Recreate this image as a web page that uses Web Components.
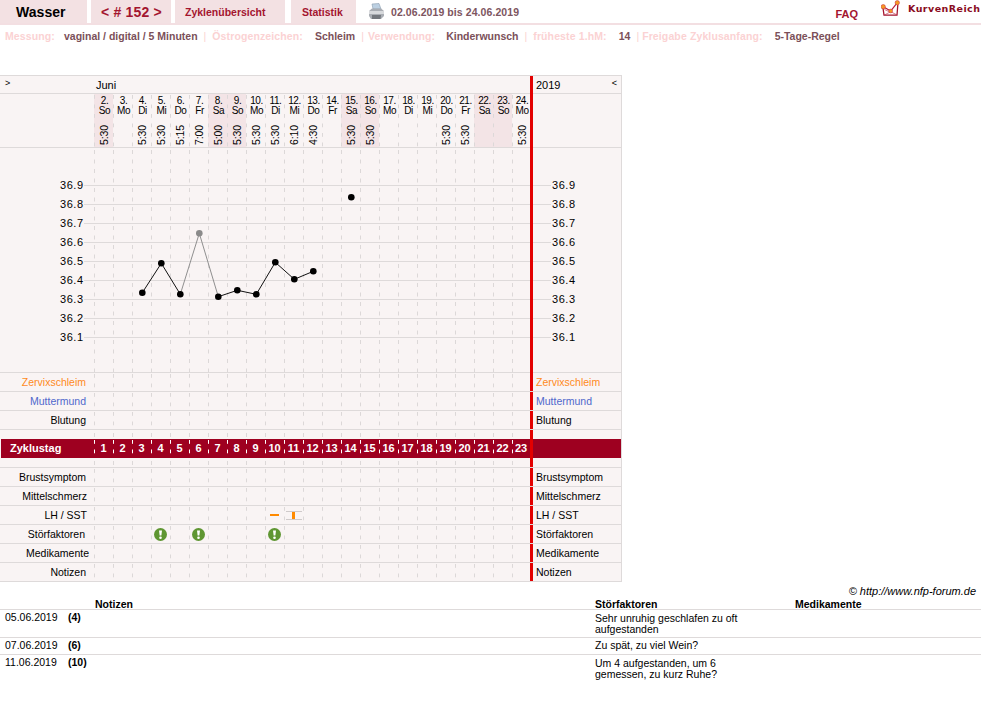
<!DOCTYPE html>
<html lang="de">
<head>
<meta charset="utf-8">
<title>Wasser</title>
<style>
  html, body { margin: 0; background: #fff; }
  body { font: 11px "Liberation Sans", Arial, sans-serif; color: #000; }
</style>
</head>
<body>
<site-header></site-header>
<meta-bar>
  <meta-item label="Messung:" value="vaginal / digital / 5 Minuten" gap="9" after="6"></meta-item>
  <meta-item label="Östrogenzeichen:" value="Schleim" gap="12" after="4"></meta-item>
  <meta-item label="Verwendung:" value="Kinderwunsch" gap="11" after="6"></meta-item>
  <meta-item label="früheste 1.hM:" value="14" gap="12" after="3"></meta-item>
  <meta-item label="Freigabe Zyklusanfang:" value="5-Tage-Regel" gap="12" last></meta-item>
</meta-bar>
<cycle-chart></cycle-chart>
<note-table>
  <note-row date="05.06.2019" day="(4)" factor="Sehr unruhig geschlafen zu oft aufgestanden" tall></note-row>
  <note-row date="07.06.2019" day="(6)" factor="Zu spät, zu viel Wein?"></note-row>
  <note-row date="11.06.2019" day="(10)" factor="Um 4 aufgestanden, um 6 gemessen, zu kurz Ruhe?" tall last></note-row>
</note-table>

<script>
const LINE = '#dedada';
const CHART_BG = '#f9f4f4';
const SHADE = '#f3e4e6';
const DASH = 'linear-gradient(#dcd8d8 0 4px, transparent 4px) 0 1px / 1px 9.5px repeat-y';

const DAYS = [
  ['2.', 'So', '5:30'], ['3.', 'Mo', ''], ['4.', 'Di', '5:30'], ['5.', 'Mi', '5:30'],
  ['6.', 'Do', '5:15'], ['7.', 'Fr', '7:00'], ['8.', 'Sa', '5:00'], ['9.', 'So', '5:30'],
  ['10.', 'Mo', '5:30'], ['11.', 'Di', '5:30'], ['12.', 'Mi', '6:10'], ['13.', 'Do', '4:30'],
  ['14.', 'Fr', ''], ['15.', 'Sa', '5:30'], ['16.', 'So', '5:30'], ['17.', 'Mo', ''],
  ['18.', 'Di', ''], ['19.', 'Mi', ''], ['20.', 'Do', '5:30'], ['21.', 'Fr', '5:30'],
  ['22.', 'Sa', ''], ['23.', 'So', ''], ['24.', 'Mo', '5:30'],
];
const COLS = 'repeat(22, 19px) 18px';

class SiteHeader extends HTMLElement {
  constructor() {
    super();
    this.attachShadow({mode: 'open'});
    this.shadowRoot.innerHTML = `
      <style>
        :host { display: flex; height: 23px; border-bottom: 2px solid #f3dfe2; color: #a3152f; font-weight: bold; }
        .tab { background: #f3e1e3; display: flex; align-items: center; box-sizing: border-box; white-space: nowrap; }
        .name { width: 87px; margin-right: 4px; padding-left: 16px; color: #000; font-size: 14px; letter-spacing: .05px; }
        .nav { width: 80px; margin-right: 4px; padding-left: 10px; font-size: 14px; letter-spacing: .2px; }
        .over { width: 110px; margin-right: 6px; padding-left: 10px; font-size: 10.5px; }
        .stat { width: 65px; padding-left: 11px; font-size: 10.5px; }
        .printer { margin: 3px 0 0 12px; width: 17px; height: 17px; }
        .range { margin: 0 0 0 6px; align-self: center; color: #7d5560; font-size: 10.5px; letter-spacing: .08px; }
        .faq { margin-left: auto; align-self: center; padding-top: 5px; font-size: 11px; }
        .logo { margin: 0 3px 0 23px; width: 24px; height: 20px; }
        .brand { width: 73px; padding-top: 3px; color: #8a0c22; font: bold 9.5px "DejaVu Sans", sans-serif; letter-spacing: .45px; white-space: nowrap; }
      </style>
      <div class="tab name">Wasser</div>
      <div class="tab nav">&lt; # 152 &gt;</div>
      <div class="tab over">Zyklenübersicht</div>
      <div class="tab stat">Statistik</div>
      <svg class="printer" viewBox="0 0 17 17">
        <path d="M4 1 L11 0.5 L13 6 L5 6 Z" fill="#bcd0e2" stroke="#8a9caf" stroke-width=".6"/>
        <path d="M1 8 L4 5.5 L13 5.5 L16 8 L16 13 L13 16 L3 16 L1 13 Z" fill="#a9adb3"/>
        <path d="M1 8 L16 8 L16 11 L1 11 Z" fill="#d7d9dc"/>
        <path d="M4 12 L13 12 L12.5 16 L4 16 Z" fill="#73777d"/>
      </svg>
      <div class="range">02.06.2019 bis 24.06.2019</div>
      <div class="faq">FAQ</div>
      <svg class="logo" viewBox="0 0 24 20">
        <path d="M2 8 L3 15.2 L16 15.2 L16.8 5" fill="none" stroke="#a3152f" stroke-width="1.3"/>
        <path d="M3.5 9.5 L9 12 L3.5 15 M16 15 L9.5 11.5" fill="none" stroke="#c9405a" stroke-width=".7"/>
        <path d="M2.2 6.7 L9.7 11 L16.3 2.7" fill="none" stroke="#b81c37" stroke-width="1.2"/>
        <circle cx="2.2" cy="6.7" r="2.2" fill="#f59a23" stroke="#c5223e" stroke-width=".5"/>
        <circle cx="9.7" cy="11" r="1.9" fill="#f59a23" stroke="#c5223e" stroke-width=".5"/>
        <circle cx="16.3" cy="2.7" r="2.2" fill="#f59a23" stroke="#c5223e" stroke-width=".5"/>
      </svg>
      <div class="brand">KurvenReich</div>`;
  }
}

class MetaBar extends HTMLElement {
  constructor() {
    super();
    this.attachShadow({mode: 'open'});
    this.shadowRoot.innerHTML = `
      <style>
        :host { display: flex; height: 22px; align-items: center; padding-left: 5px; font-size: 10.5px; font-weight: bold; }
      </style>
      <slot></slot>`;
  }
}

class MetaItem extends HTMLElement {
  constructor() {
    super();
    this.attachShadow({mode: 'open'});
  }
  connectedCallback() {
    const gap = this.getAttribute('gap');
    const after = this.getAttribute('after') || 5;
    this.shadowRoot.innerHTML = `
      <style>
        :host { display: flex; white-space: nowrap; }
        .l, .sep { color: #fbd2d3; }
        .l { letter-spacing: .12px; }
        .v { color: #7b5059; margin-left: ${gap}px; }
        .sep { margin: 0 ${after}px 0 6px; font-weight: normal; }
      </style>
      <span class="l">${this.getAttribute('label')}</span>
      <span class="v">${this.getAttribute('value')}</span>
      ${this.hasAttribute('last') ? '' : '<span class="sep">|</span>'}`;
  }
}

class TempPlot extends HTMLElement {
  constructor() {
    super();
    this.attachShadow({mode: 'open'});
  }
  connectedCallback() {
    const W = 530, H = 224;
    const yOf = i => 37.5 + 19 * i;  // 36.9 is at page y 185, the plot starts at 148
    let s = '';
    for (let k = 0; k < 23; k++) {
      const x = 94.5 + 19 * k;
      s += `<line x1="${x}" x2="${x}" y1="2" y2="${H}" stroke="#dcd8d8" stroke-dasharray="4 5.5"/>`;
    }
    for (let i = 0; i < 9; i++) {
      const y = yOf(i);
      s += `<line x1="84" x2="${W}" y1="${y}" y2="${y}" stroke="${LINE}"/>`;
      s += `<text x="60" y="${y + 3}" textLength="23">${(36.9 - i / 10).toFixed(1)}</text>`;
    }
    const pts = [[142.3, 292.7], [161.3, 263.3], [180.3, 294.3], [199.3, 233.3, 1], [218.3, 296.7],
      [237.3, 290.3], [256.3, 294.3], [275.3, 262.3], [294.3, 279.3], [313.3, 271.3]];
    pts.forEach((p, i) => {
      const n = pts[i + 1];
      if (!n) return;
      const grey = p[2] || n[2];
      s += `<line x1="${p[0]}" y1="${p[1] - 148}" x2="${n[0]}" y2="${n[1] - 148}" stroke="${grey ? '#8f8f8f' : '#111'}" stroke-width="1"/>`;
    });
    pts.concat([[351.3, 197.3]]).forEach(p => {
      s += `<circle cx="${p[0]}" cy="${p[1] - 148}" r="3.3" fill="${p[2] ? '#8b8b8b' : '#000'}"/>`;
    });
    this.shadowRoot.innerHTML = `
      <style>
        :host { display: block; height: ${H}px; border-bottom: 1px solid ${LINE}; }
        svg { display: block; }
        text { font: 11px "Liberation Sans", sans-serif; fill: #000; }
      </style>
      <svg width="${W}" height="${H}">${s}</svg>`;
  }
}

class PlotAxis extends HTMLElement {
  constructor() {
    super();
    this.attachShadow({mode: 'open'});
    const ticks = [];
    for (let i = 0; i < 9; i++) ticks.push(`<div class="t"><i></i><span>${(36.9 - i / 10).toFixed(1)}</span></div>`);
    this.shadowRoot.innerHTML = `
      <style>
        :host { display: block; height: 196px; padding-top: 28px; border-bottom: 1px solid ${LINE}; }
        .t { display: flex; align-items: center; height: 19px; }
        i { width: 18px; height: 1px; background: ${LINE}; }
        span { margin: 0 0 2px 1px; width: 24px; letter-spacing: .55px; }
      </style>
      ${ticks.join('')}`;
  }
}

class DayHead extends HTMLElement {
  constructor() {
    super();
    this.attachShadow({mode: 'open'});
    const cells = DAYS.map(d => {
      const weekend = d[1] === 'Sa' || d[1] === 'So';
      return `<div class="d${weekend ? ' we' : ''}"><b>${d[0]}</b><b>${d[1]}</b>${d[2] ? `<em>${d[2]}</em>` : ''}</div>`;
    }).join('');
    this.shadowRoot.innerHTML = `
      <style>
        :host { display: grid; grid-template-columns: 94px ${COLS}; height: 53px; border-bottom: 1px solid ${LINE}; }
        .d { display: flex; flex-direction: column; align-items: center; padding: 2px 0 0 2px; box-sizing: border-box; height: 53px; background: ${DASH}; font-size: 10px; letter-spacing: -.4px; }
        .we { background: ${DASH}, ${SHADE}; }
        b { font-weight: normal; line-height: 10px; }
        em { font-style: normal; writing-mode: vertical-rl; transform: rotate(180deg); margin-top: auto; margin-bottom: 2px; font-size: 10.5px; letter-spacing: -.1px; line-height: 11px; }
      </style>
      <div></div>${cells}`;
  }
}

class WarnIcon extends HTMLElement {
  constructor() {
    super();
    this.attachShadow({mode: 'open'});
    this.shadowRoot.innerHTML = `
      <style>:host { display: block; width: 13px; height: 13px; } svg { display: block; }</style>
      <svg width="13" height="13" viewBox="0 0 13 13">
        <circle cx="6.5" cy="6.5" r="6.5" fill="#5f9632"/>
        <path d="M5 2.5 H8 L7.4 7.5 H5.6 Z" fill="#fff"/>
        <circle cx="6.5" cy="9.7" r="1.3" fill="#fff"/>
      </svg>`;
  }
}

class ChartRow extends HTMLElement {
  constructor() {
    super();
    this.attachShadow({mode: 'open'});
  }
  connectedCallback() {
    const label = this.getAttribute('label') || '';
    const color = this.getAttribute('color') || '#000';
    const pr = this.getAttribute('pr') || 8;
    const warn = (this.getAttribute('warn') || '').split(',');
    const lh = this.getAttribute('lh');
    const sst = this.getAttribute('sst');
    let cells = '';
    for (let k = 1; k <= 23; k++) {
      let inner = '';
      if (warn.includes(String(k))) inner = '<warn-icon></warn-icon>';
      if (lh === String(k)) inner = '<i class="lh"></i>';
      if (sst === String(k)) inner = '<i class="sst"><u></u></i>';
      cells += `<div class="c">${inner}</div>`;
    }
    this.shadowRoot.innerHTML = `
      <style>
        :host { display: grid; grid-template-columns: 94px ${COLS} 3px 1fr; height: 18px; border-bottom: 1px solid ${LINE}; font-size: 10.5px; line-height: 18px; }
        .l { text-align: right; padding-right: ${pr}px; color: ${color}; white-space: nowrap; }
        .c { display: flex; align-items: center; justify-content: center; background: ${DASH}; }
        .red { background: #e30000; }
        .r { padding-left: 3px; color: ${color}; white-space: nowrap; }
        .lh { width: 9px; height: 1.5px; background: #ff8a00; }
        .sst { display: flex; justify-content: center; flex: none; width: 16px; height: 7px; border: solid #cfcaca; border-width: 1px 0; }
        u { width: 3px; background: #ff8a00; }
      </style>
      <div class="l">${label}</div>${cells}<div class="red"></div><div class="r">${label}</div>`;
  }
}

class ChartBand extends HTMLElement {
  constructor() {
    super();
    this.attachShadow({mode: 'open'});
    let cells = '';
    for (let k = 1; k <= 23; k++) cells += `<div class="c">${k}</div>`;
    this.shadowRoot.innerHTML = `
      <style>
        :host { display: grid; grid-template-columns: 93px ${COLS} 3px 1fr; height: 19px; margin-left: 1px; background: #9e0020; color: #fff; font-weight: bold; line-height: 19px; }
        .l { padding-left: 9px; }
        .c { text-align: center; background: linear-gradient(#fff 0 4px, transparent 4px) 0 1px / 1px 9.5px repeat-y; }
        .red { background: #e30000; }
      </style>
      <div class="l">Zyklustag</div>${cells}<div class="red"></div><div></div>`;
  }
}

class ChartGap extends HTMLElement {
  constructor() {
    super();
    this.attachShadow({mode: 'open'});
  }
  connectedCallback() {
    const line = this.hasAttribute('line') ? `border-bottom: 1px solid ${LINE};` : '';
    this.shadowRoot.innerHTML = `
      <style>
        :host { display: grid; grid-template-columns: 94px ${COLS} 3px 1fr; height: 9px; ${line} }
        .c { background: linear-gradient(#dcd8d8 0 4px, transparent 4px) 0 3px / 1px 9.5px no-repeat; }
        .red { background: #e30000; }
      </style>
      <div></div>${'<div class="c"></div>'.repeat(23)}<div class="red"></div><div></div>`;
  }
}

class CycleChart extends HTMLElement {
  constructor() {
    super();
    this.attachShadow({mode: 'open'});
    this.shadowRoot.innerHTML = `
      <style>
        :host { display: block; width: 621px; margin-top: 28px; border-right: 1px solid ${LINE}; border-top: 1px solid ${LINE}; background: ${CHART_BG}; }
        .top { display: grid; grid-template-columns: 530px 3px 1fr; }
        .red { background: #e30000; }
        .month { display: flex; height: 17px; border-bottom: 1px solid ${LINE}; line-height: 18px; }
        .arrow { width: 94px; box-sizing: border-box; padding-left: 5px; font-size: 9px; line-height: 14px; }
        .juni { padding-left: 2px; }
        .side { justify-content: space-between; padding: 0 4px 0 3px; }
        .side .arrow { width: auto; padding: 0; }
        .blank { height: 53px; border-bottom: 1px solid ${LINE}; }
      </style>
      <div class="top">
        <div>
          <div class="month"><span class="arrow">&gt;</span><span class="juni">Juni</span></div>
          <day-head></day-head>
          <temp-plot></temp-plot>
        </div>
        <div class="red"></div>
        <div>
          <div class="month side"><span>2019</span><span class="arrow">&lt;</span></div>
          <div class="blank"></div>
          <plot-axis></plot-axis>
        </div>
      </div>
      <chart-row label="Zervixschleim" color="#ff8a1c"></chart-row>
      <chart-row label="Muttermund" color="#5068cc"></chart-row>
      <chart-row label="Blutung"></chart-row>
      <chart-gap></chart-gap>
      <chart-band></chart-band>
      <chart-gap line></chart-gap>
      <chart-row label="Brustsymptom"></chart-row>
      <chart-row label="Mittelschmerz" pr="7"></chart-row>
      <chart-row label="LH / SST" pr="7" lh="10" sst="11"></chart-row>
      <chart-row label="Störfaktoren" pr="9" warn="4,6,10"></chart-row>
      <chart-row label="Medikamente" pr="5"></chart-row>
      <chart-row label="Notizen"></chart-row>`;
  }
}

class NoteTable extends HTMLElement {
  constructor() {
    super();
    this.attachShadow({mode: 'open'});
    this.shadowRoot.innerHTML = `
      <style>
        :host { display: block; font-size: 10.5px; line-height: 11px; }
        .credit { text-align: right; padding: 2px 5px 0 0; height: 11px; font-size: 11px; font-style: italic; line-height: 14px; }
        .head { display: grid; grid-template-columns: 95px 500px 200px 1fr; height: 15px; padding-top: 4px; box-sizing: border-box; border-bottom: 1px solid ${LINE}; font-weight: bold; line-height: 10px; }
      </style>
      <div class="credit">© http://www.nfp-forum.de</div>
      <div class="head"><span></span><span>Notizen</span><span>Störfaktoren</span><span>Medikamente</span></div>
      <slot></slot>`;
  }
}

class NoteRow extends HTMLElement {
  constructor() {
    super();
    this.attachShadow({mode: 'open'});
  }
  connectedCallback() {
    const last = this.hasAttribute('last');
    const tall = this.hasAttribute('tall');
    this.shadowRoot.innerHTML = `
      <style>
        :host { display: grid; grid-template-columns: 68px 27px 500px 150px; padding: 2px 0 3px; box-sizing: border-box; height: ${tall ? 28 : 17}px; border-bottom: ${last ? 0 : 1}px solid ${LINE}; }
        .date { padding-left: 5px; }
        .factor { margin-top: ${tall ? 1 : 0}px; }
        b { font-weight: bold; }
      </style>
      <span class="date">${this.getAttribute('date')}</span>
      <b>${this.getAttribute('day')}</b>
      <span></span>
      <span class="factor">${this.getAttribute('factor')}</span>`;
  }
}

customElements.define('site-header', SiteHeader);
customElements.define('meta-bar', MetaBar);
customElements.define('meta-item', MetaItem);
customElements.define('temp-plot', TempPlot);
customElements.define('plot-axis', PlotAxis);
customElements.define('day-head', DayHead);
customElements.define('warn-icon', WarnIcon);
customElements.define('chart-row', ChartRow);
customElements.define('chart-band', ChartBand);
customElements.define('chart-gap', ChartGap);
customElements.define('cycle-chart', CycleChart);
customElements.define('note-table', NoteTable);
customElements.define('note-row', NoteRow);
</script>
</body>
</html>
